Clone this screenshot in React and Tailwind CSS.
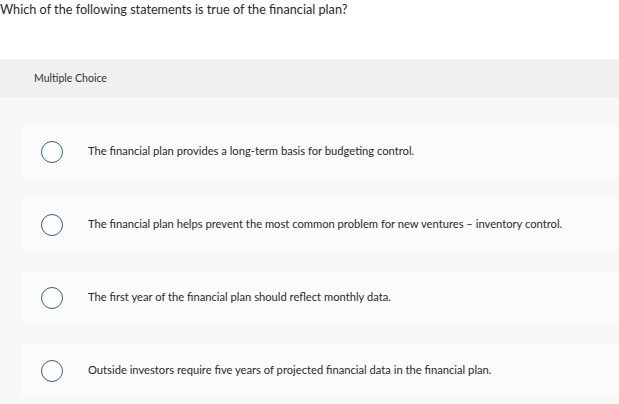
import React from 'react';

const options = [
  'The financial plan provides a long-term basis for budgeting control.',
  'The financial plan helps prevent the most common problem for new ventures – inventory control.',
  'The first year of the financial plan should reflect monthly data.',
  'Outside investors require five years of projected financial data in the financial plan.',
];

const Option = ({ text }) => (
  <div className="flex items-center h-[53px] bg-[#fbfbfb] rounded-sm">
    <div className="ml-[20px] w-[22px] h-[22px] rounded-full border-[1.5px] border-[#2f5f8c] bg-white shrink-0" />
    <span className="ml-[25px] text-[11.2px] text-[#2a2a2a]">{text}</span>
  </div>
);

export default function App() {
  return (
    <div className="w-[619px] h-[404px] bg-white overflow-hidden" style={{ fontFamily: 'Lato, "Open Sans", sans-serif' }}>
      <div className="h-[59px] pt-px">
        <p className="text-[12.7px] text-[#2a2a2a] leading-4">Which of the following statements is true of the financial plan?</p>
      </div>
      <div className="h-[39px] bg-[#f0f0f0] flex items-center pl-[34px]">
        <span className="text-[10.5px] text-[#333]">Multiple Choice</span>
      </div>
      <div className="bg-[#f7f7f7] h-[306px] pl-[21px] pt-[27px] flex flex-col gap-[20px]">
        {options.map((o) => (
          <Option key={o} text={o} />
        ))}
      </div>
    </div>
  );
}
